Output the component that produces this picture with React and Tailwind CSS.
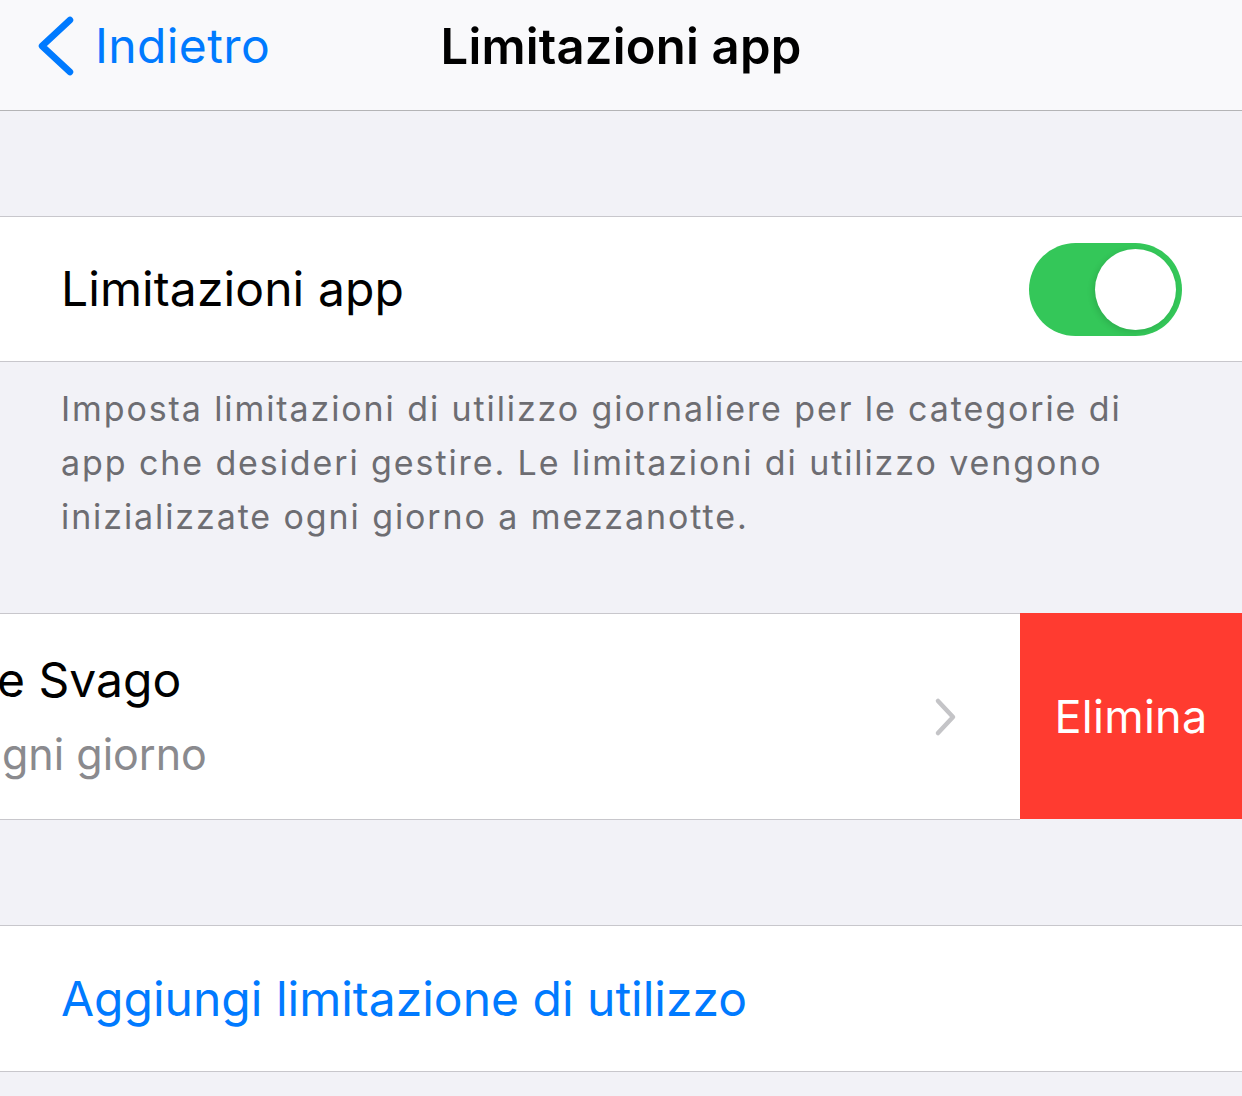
export default function App() {
  const font = { fontFamily: 'Inter, "Liberation Sans", sans-serif' }
  return (
    <div className="w-[1242px] h-[1096px] overflow-hidden bg-[#f2f2f7]" style={font}>
      {/* Nav bar */}
      <div className="relative h-[111px] bg-[#f9f9fb] border-b border-[#b4b4b6] flex items-center">
        <div className="flex items-center pl-[36px] pb-[18px] text-[#007aff]">
          <svg width="40" height="60" viewBox="0 0 40 60" fill="none">
            <path d="M34 4 L6 30 L34 56" stroke="#007aff" strokeWidth="6.5" strokeLinecap="round" strokeLinejoin="round" />
          </svg>
          <span className="ml-[19px] text-[48px] leading-none tracking-[0.4px]">Indietro</span>
        </div>
        <div className="absolute inset-x-0 top-0 h-[92px] flex items-center justify-center">
          <span className="text-[49px] font-semibold leading-none text-black tracking-[0.2px]">Limitazioni app</span>
        </div>
      </div>

      <div className="h-[105px]" />

      {/* Toggle row */}
      <div className="h-[146px] bg-white border-y border-[#c8c7cc] flex items-center justify-between pl-[61px] pr-[60px]">
        <span className="text-[48px] leading-none text-black tracking-[0.1px]">Limitazioni app</span>
        <div className="w-[153px] h-[93px] rounded-full bg-[#34c759] flex items-center justify-end pr-[6px]">
          <div className="w-[81px] h-[81px] rounded-full bg-white shadow-[-2px_2px_6px_rgba(0,0,0,0.12)]" />
        </div>
      </div>

      {/* Footer text */}
      <div className="h-[251px] pl-[61px] pr-[100px] pt-[20px]">
        <p className="text-[34px] leading-[54px] text-[#6d6d72] tracking-[1.9px]">
          Imposta limitazioni di utilizzo giornaliere per le categorie di app che desideri gestire. Le limitazioni di utilizzo vengono inizializzate ogni giorno a mezzanotte.
        </p>
      </div>

      {/* Swiped row */}
      <div className="flex items-start">
        <div className="flex-1 h-[207px] bg-white border-y border-[#c8c7cc] flex items-center justify-between pr-[62px]">
          <div className="flex flex-col -ml-[3px]">
            <span className="text-[48px] leading-[74px] text-black tracking-[0px]">e Svago</span>
            <span className="text-[43px] leading-[74px] text-[#8a8a8e] pl-[5px] tracking-[0px]">gni giorno</span>
          </div>
          <svg width="24" height="40" viewBox="0 0 24 40" fill="none">
            <path d="M4 4 L19 20 L4 36" stroke="#c4c4c7" strokeWidth="4.5" strokeLinecap="round" strokeLinejoin="round" />
          </svg>
        </div>
        <div className="w-[222px] h-[206px] bg-[#ff3b30] flex items-center justify-center">
          <span className="text-[45px] leading-none text-white tracking-[0.3px]">Elimina</span>
        </div>
      </div>

      <div className="h-[105px]" />

      {/* Add row */}
      <div className="h-[147px] bg-white border-y border-[#c8c7cc] flex items-center pl-[61px]">
        <span className="text-[48px] leading-none text-[#007aff] tracking-[0px]">Aggiungi limitazione di utilizzo</span>
      </div>
    </div>
  )
}
